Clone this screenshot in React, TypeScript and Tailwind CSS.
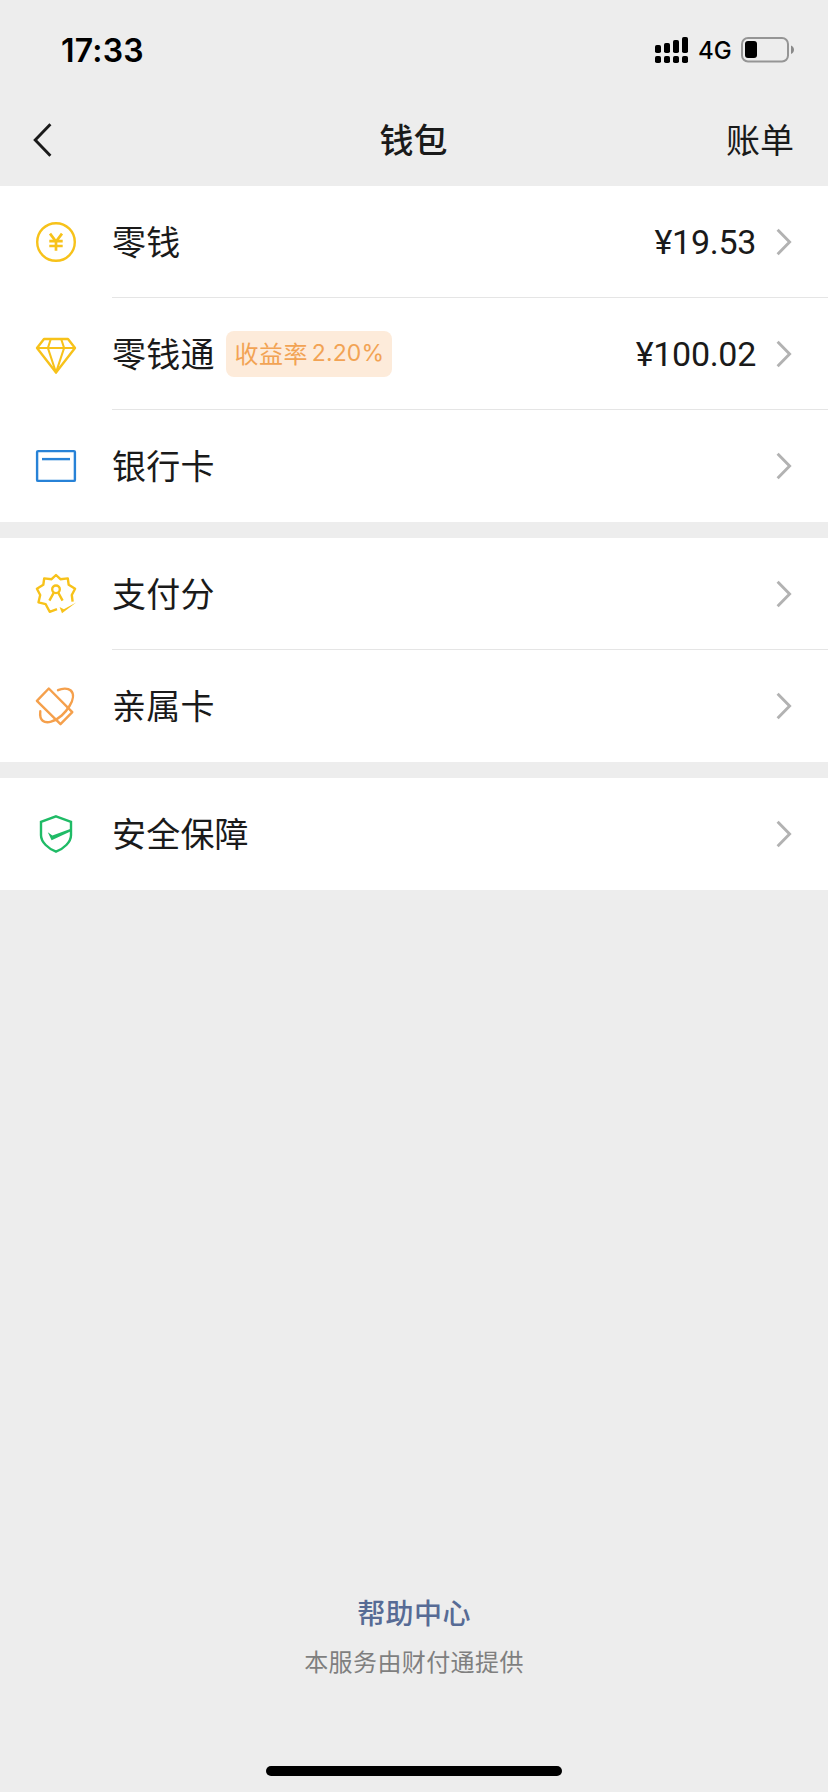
// wallet page

import { ReactNode } from "react";

const YELLOW = "#f7c21a";
const BLUE = "#2782d7";
const ORANGE = "#f5a04c";
const GREEN = "#1fbb66";

type Item = {
  label: string;
  icon: ReactNode;
  tag?: ReactNode;
  value?: string;
};

const iconProps = {
  width: 48,
  height: 48,
  viewBox: "0 0 48 48",
  fill: "none",
  strokeWidth: 2.4,
};

function BalanceIcon() {
  return (
    <svg {...iconProps} stroke={YELLOW}>
      <circle cx="24" cy="24" r="18.8" />
      <path d="M18 15.6 24 23.5l6-7.9M24 23.5v9.2M17.3 23.2h13.4M17.3 28h13.4" strokeWidth="2.7" />
    </svg>
  );
}

function DiamondIcon() {
  return (
    <svg {...iconProps} stroke={YELLOW} strokeLinejoin="round">
      <path d="M12 9h24l7 9-19 24.5L5 18z" />
      <path d="M5 18h38M18.8 9l-2.9 9L24 42.5 32.1 18l-2.9-9" strokeWidth="2.1" />
    </svg>
  );
}

function CardIcon() {
  return (
    <svg {...iconProps} stroke={BLUE}>
      <rect x="5.1" y="9.1" width="37.8" height="29.800" rx="1" />
      <path d="M10 17.1h28" />
    </svg>
  );
}

function ScoreIcon() {
  return (
    <svg {...iconProps} stroke={YELLOW} strokeLinejoin="round">
      <path d="M40.6 31.6 39.8 25l3.3-6.2-6.4-4-.9-6.4-7.4.8L24 5l-4.4 4.2-7.4-.8-.9 6.4-6.4 4L8.2 25l-1.700 7.3 7.2 1.9 4 7.6 7.3-2.6" />
      <circle cx="24" cy="19.3" r="3.800" />
      <path d="m21.8 22.6-4.4 8M26.2 22.6l4.4 8" />
      <path d="m27.6 37 4.2 2.2L44.200 32.4 30 43.2z" fill={YELLOW} stroke="none" />
    </svg>
  );
}

function FamilyIcon() {
  return (
    <svg {...iconProps} stroke={ORANGE} strokeLinejoin="round" strokeLinecap="round">
      <path d="M16.8 6.5 4.9 18.8l23.6 23.4 11.8-12z" />
      <path d="M26 8.2c4-1.9 9.800-2.400 12.800.3 3.400 3.100 2.600 9.300-1.300 15.500-1.700 2.800-4.400 6.400-7.800 9.500-7 6.300-15 8.500-19 5.200-2.100-1.800-2.900-5.200-2.400-9.400" />
    </svg>
  );
}

function ShieldIcon() {
  return (
    <svg {...iconProps} stroke={GREEN}>
      <path d="M24 6.300 39 11.800v13.400c0 7-7.500 13.600-15 16.500-7.500-2.900-15-9.500-15-16.500V11.800z" />
      <path d="m15.800 22.300 4.600 3.100L39.500 18.400v2.500L19.600 30.300z" fill={GREEN} stroke="none" />
    </svg>
  );
}

function Chevron() {
  return (
    <svg width="16" height="28" viewBox="0 0 16 28" fill="none" stroke="#b2b2b2" strokeWidth="2.900">
      <path d="m1.600 1.700 12 12.300-12 12.300" />
    </svg>
  );
}

const groups: Item[][] = [
  [
    { label: "零钱", icon: <BalanceIcon />, value: "¥19.53" },
    {
      label: "零钱通",
      icon: <DiamondIcon />,
      value: "¥100.02",
      tag: (
        <span className="ml-[11px] flex h-[46px] w-[166px] items-center rounded-lg bg-[#fdebda] pl-[9px] text-[24px] tracking-[0.4px] whitespace-nowrap text-[#f2a354]">
          <span className="pb-0.5">收益率</span>
          <span className="ml-1 font-['Inter'] text-[23px] tracking-[0.1px]">2.20%</span>
        </span>
      ),
    },
    { label: "银行卡", icon: <CardIcon /> },
  ],
  [
    { label: "支付分", icon: <ScoreIcon /> },
    { label: "亲属卡", icon: <FamilyIcon /> },
  ],
  [{ label: "安全保障", icon: <ShieldIcon /> }],
];

function Row({ item, last }: { item: Item; last: boolean }) {
  return (
    <div className="flex h-28 items-center pl-8">
      {item.icon}
      <div className={`ml-8 flex h-full flex-1 items-center pr-9 ${last ? "" : "border-b border-[#e5e5e5]"}`}>
        <span className="pb-0.5 tracking-[0.2px]">{item.label}</span>
        {item.tag}
        <span className="mr-5 ml-auto font-['Roboto'] tracking-[-0.3px]">{item.value}</span>
        <Chevron />
      </div>
    </div>
  );
}

function StatusBar() {
  return (
    <div className="flex h-[98px] items-center justify-between pt-0.5 pr-[34px] pl-[61px] font-['Inter'] text-black">
      <span className="pt-px text-[32px] font-semibold tracking-[0.2px]">17:33</span>
      <div className="flex items-center">
        <svg width="34" height="26" viewBox="0 0 34 26">
          <rect x="0" y="8" width="6" height="8" rx="1.800" />
          <rect x="9" y="6" width="6" height="10" rx="1.800" />
          <rect x="18" y="3" width="6" height="13" rx="1.800" />
          <rect x="27" y="0" width="6" height="16" rx="1.800" />
          <rect x="0" y="19" width="6" height="7" rx="1.800" />
          <rect x="9" y="19" width="6" height="7" rx="1.800" />
          <rect x="18" y="19" width="6" height="7" rx="1.800" />
          <rect x="27" y="19" width="6" height="7" rx="1.800" />
        </svg>
        <span className="ml-[9px] w-[43px] pt-px text-[24px] font-medium">4G</span>
        <svg width="53" height="26" viewBox="0 0 53 26">
          <rect x="1" y="1" width="46" height="23.500" rx="6" fill="none" stroke="#959595" strokeWidth="2" />
          <rect x="4" y="4" width="12" height="17" rx="3" />
          <path d="M50 8.500c4 1.500 4 7 0 8.500z" fill="#8a8a8a" />
        </svg>
      </div>
    </div>
  );
}

export default function App() {
  return (
    <div className="flex h-[1792px] w-[828px] flex-col bg-[#ededed] font-['Noto_Sans_CJK_SC',sans-serif] text-[34px] leading-none text-[#1a1a1a]">
      <StatusBar />

      <div className="flex h-[88px] items-center justify-between pr-[34px] pb-1 pl-[33px]">
        <svg width="68" height="34" viewBox="0 0 68 34" fill="none" stroke="#1a1a1a" strokeWidth="2.900">
          <path d="M17.400 1.200 2.200 17l15.200 15.800" />
        </svg>
        <h1 className="pb-0.5 font-medium">钱包</h1>
        <span className="pb-0.5">账单</span>
      </div>

      <main className="flex flex-col gap-4">
        {groups.map((items, i) => (
          <section key={i} className="bg-white">
            {items.map((item, j) => (
              <Row key={item.label} item={item} last={j === items.length - 1} />
            ))}
          </section>
        ))}
      </main>

      <footer className="mt-auto flex flex-col items-center">
        <a className="text-[28px] font-medium tracking-[0.4px] text-[#576b95]">帮助中心</a>
        <p className="mt-[23px] text-[24px] tracking-[0.4px] text-[#7f7f7f]">本服务由财付通提供</p>
        <div className="mt-[93px] mb-4 h-2.5 w-[296px] rounded-full bg-black" />
      </footer>
    </div>
  );
}
